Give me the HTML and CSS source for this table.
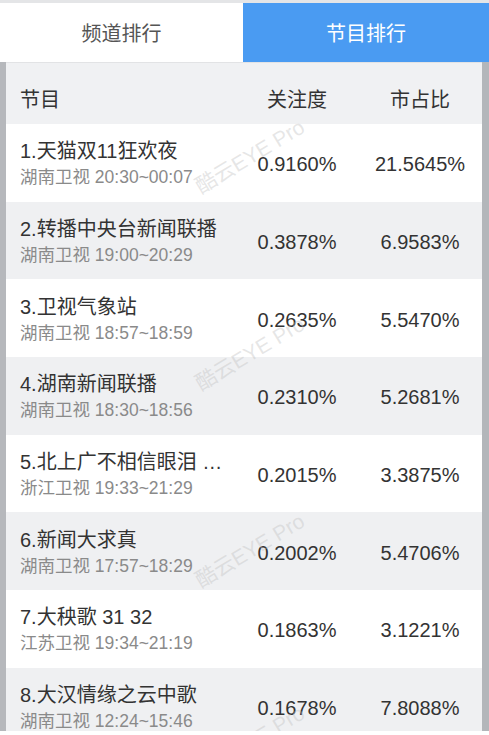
FILE: index.html
```html
<!DOCTYPE html>
<html lang="zh-CN">
<head>
<meta charset="utf-8">
<title>节目排行</title>
<link rel="stylesheet" href="styles.css">
</head>
<body>
<div class="topbar"></div>
<nav class="tabs">
  <div class="tab">频道排行</div>
  <div class="tab active">节目排行</div>
</nav>
<main class="table">
  <div class="row head">
    <div class="c1">节目</div>
    <div class="c2">关注度</div>
    <div class="c3">市占比</div>
  </div>
  <div class="row">
    <div class="c1"><div class="title">1.天猫双11狂欢夜</div><div class="sub">湖南卫视 20:30~00:07</div></div>
    <div class="c2">0.9160%</div>
    <div class="c3">21.5645%</div>
  </div>
  <div class="row alt">
    <div class="c1"><div class="title">2.转播中央台新闻联播</div><div class="sub">湖南卫视 19:00~20:29</div></div>
    <div class="c2">0.3878%</div>
    <div class="c3">6.9583%</div>
  </div>
  <div class="row">
    <div class="c1"><div class="title">3.卫视气象站</div><div class="sub">湖南卫视 18:57~18:59</div></div>
    <div class="c2">0.2635%</div>
    <div class="c3">5.5470%</div>
  </div>
  <div class="row alt">
    <div class="c1"><div class="title">4.湖南新闻联播</div><div class="sub">湖南卫视 18:30~18:56</div></div>
    <div class="c2">0.2310%</div>
    <div class="c3">5.2681%</div>
  </div>
  <div class="row">
    <div class="c1"><div class="title">5.北上广不相信眼泪 …</div><div class="sub">浙江卫视 19:33~21:29</div></div>
    <div class="c2">0.2015%</div>
    <div class="c3">3.3875%</div>
  </div>
  <div class="row alt">
    <div class="c1"><div class="title">6.新闻大求真</div><div class="sub">湖南卫视 17:57~18:29</div></div>
    <div class="c2">0.2002%</div>
    <div class="c3">5.4706%</div>
  </div>
  <div class="row">
    <div class="c1"><div class="title">7.大秧歌 31 32</div><div class="sub">江苏卫视 19:34~21:19</div></div>
    <div class="c2">0.1863%</div>
    <div class="c3">3.1221%</div>
  </div>
  <div class="row alt">
    <div class="c1"><div class="title">8.大汉情缘之云中歌</div><div class="sub">湖南卫视 12:24~15:46</div></div>
    <div class="c2">0.1678%</div>
    <div class="c3">7.8088%</div>
  </div>
  <div class="marks" aria-hidden="true">
    <span class="mark m1">酷云EYE Pro</span>
    <span class="mark m2">酷云EYE Pro</span>
    <span class="mark m3">酷云EYE Pro</span>
    <span class="mark m4">酷云EYE Pro</span>
  </div>
</main>
</body>
</html>
```

FILE: styles.css
```css
* { box-sizing: border-box; }
html, body { margin: 0; padding: 0; background: #fff; }
body {
  width: 489px;
  height: 735px;
  overflow: hidden;
  font-family: "Liberation Sans", "Noto Sans CJK SC", sans-serif;
  color: #333;
}
.topbar { height: 3px; background: #e4e5e7; }
.tabs { display: flex; height: 59px; }
.tab {
  width: 243px;
  display: flex;
  align-items: center;
  justify-content: center;
  font-size: 20px;
  color: #555;
  background: #fff;
}
.tab.active { flex: 1; background: #4a9bf2; color: #fff; }
.table {
  position: relative;
  height: 669px;
  border-left: 6px solid #b6b8bc;
  border-right: 7px solid #b3b6ba;
  overflow: hidden;
}
.row {
  display: flex;
  align-items: center;
  height: 77.7px;
  padding-top: 4px;
  background: #fff;
}
.row.alt { background: #eff0f2; }
.row.head {
  height: 62px;
  background: #f0f1f3;
  font-size: 20px;
  padding-top: 9px;
  border-top: 1px solid #e2e3e5;
}
.c1 { width: 230px; padding-left: 14px; }
.c2 { width: 122px; text-align: center; font-size: 20px; }
.c3 { flex: 1; text-align: center; font-size: 20px; }
.title { font-size: 20px; line-height: 25px; white-space: nowrap; color: #333; }
.sub { font-size: 17.5px; line-height: 26px; color: #8a8a8a; white-space: nowrap; }
.marks { position: absolute; inset: 0; pointer-events: none; }
.mark {
  position: absolute;
  left: 178px;
  width: 130px;
  font-size: 21px;
  color: rgba(190, 190, 190, 0.38);
  white-space: nowrap;
  transform: rotate(-31deg);
  transform-origin: center;
  text-align: center;
}
.m1 { top: 78px; }
.m2 { top: 275px; }
.m3 { top: 472px; }
.m4 { top: 664px; }
```
